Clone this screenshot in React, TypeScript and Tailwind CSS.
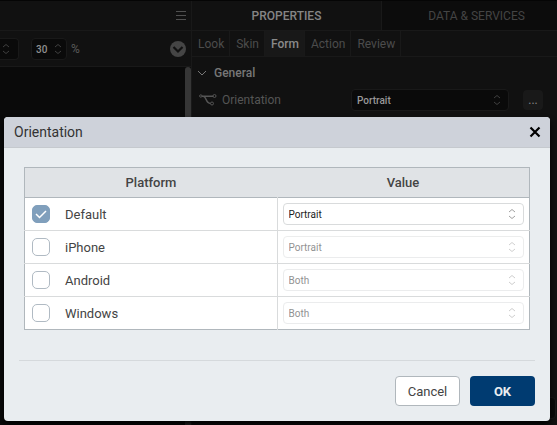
import { useState } from "react";
import type { ReactNode } from "react";

function Spinner({ className = "" }: { className?: string }) {
  return (
    <svg
      className={"pointer-events-none h-3 w-2 shrink-0 " + className}
      viewBox="0 0 8 12"
      fill="none"
      stroke="currentColor"
      strokeWidth="1"
      aria-hidden="true"
    >
      <path d="M1 4 4 1.5 7 4M1 8 4 10.5 7 8" />
    </svg>
  );
}

function SelectBox({
  label,
  value,
  disabled = false,
}: {
  label: string;
  value: string;
  disabled?: boolean;
}) {
  return (
    <div className={"relative " + (disabled ? "opacity-50" : "")}>
      <select
        aria-label={label}
        defaultValue={value}
        disabled={disabled}
        className="block h-[22px] w-full appearance-none rounded border border-[#d9dbdc] bg-white px-[5px] pt-px text-[10px] text-[#222] opacity-100"
      >
        <option>Portrait</option>
        <option>Landscape</option>
        <option>Both</option>
      </select>
      <Spinner className="absolute top-[5px] right-2 text-[#a0a0a0]" />
    </div>
  );
}

const platforms = [
  { name: "Default", value: "Portrait" },
  { name: "iPhone", value: "Portrait" },
  { name: "Android", value: "Both" },
  { name: "Windows", value: "Both" },
];

function PlatformRow({ name, value }: { name: string; value: string }) {
  const [checked, setChecked] = useState(name === "Default");
  return (
    <tr className="h-[33px] border-t border-[#d9dbdc] first:border-[#b0b7bc]">
      <td className="border-r border-[#d9dbdc] p-0">
        <label className="flex items-center pl-[7px] text-[13px]">
          <span className="relative mr-[15px] block size-[18px]">
            <input
              type="checkbox"
              checked={checked}
              onChange={(e) => setChecked(e.target.checked)}
              className="block size-[18px] appearance-none rounded-[5px] border border-[#b0bac3] bg-white checked:border-[#809fbc] checked:bg-[#809fbc]"
            />
            {checked && (
              <svg
                className="pointer-events-none absolute inset-0"
                viewBox="0 0 18 18"
                fill="none"
                stroke="white"
                strokeWidth="1.5"
                aria-hidden="true"
              >
                <path d="m4 9 3.5 3.5L14 6" />
              </svg>
            )}
          </span>
          <span className="pt-[2px] leading-4">{name}</span>
        </label>
      </td>
      <td className="px-[5px] py-0">
        <SelectBox label={name + " orientation"} value={value} disabled={!checked} />
      </td>
    </tr>
  );
}

function Dialog() {
  return (
    <section
      role="dialog"
      aria-labelledby="dialog-title"
      className="flex w-full flex-col self-start overflow-hidden rounded bg-[#e9edf0] text-[#444] shadow-[0_4px_6px_#000]"
    >
      <header className="flex h-[31px] items-center justify-between border-b border-[#c5c9ce] bg-[#ced2da] pr-[9px] pl-[10px]">
        <h2 id="dialog-title" className="text-sm text-[#333]">
          Orientation
        </h2>
        <button type="button" aria-label="Close" className="text-black">
          <svg className="size-3" viewBox="0 0 12 12" stroke="currentColor" strokeWidth="2.2" aria-hidden="true">
            <path d="m1.5 1.5 9 9m0-9-9 9" />
          </svg>
        </button>
      </header>
      <div className="px-5 pt-[19px]">
        <table className="w-full table-fixed border-collapse border border-[#b0b7bc] bg-white">
          <thead>
            <tr className="h-[30px] bg-[#e0e3e6] text-[13px]">
              <th className="p-0 font-medium">Platform</th>
              <th className="p-0 font-medium">Value</th>
            </tr>
          </thead>
          <tbody>
            {platforms.map((p) => (
              <PlatformRow key={p.name} name={p.name} value={p.value} />
            ))}
          </tbody>
        </table>
      </div>
      <footer className="mx-[15px] mt-[30px] flex justify-end gap-[10px] border-t border-[#d5d9dc] pt-[15px] pb-[15px]">
        <button
          type="button"
          className="h-[30px] w-[65px] rounded border border-[#b0b7bc] bg-white pt-px text-[13px]"
        >
          Cancel
        </button>
        <button
          type="button"
          className="h-[30px] w-[65px] rounded bg-[#003b71] pt-px text-[13px] font-bold text-[#e9edf0]"
        >
          OK
        </button>
      </footer>
    </section>
  );
}

function Tab({ children, active = false }: { children: ReactNode; active?: boolean }) {
  return (
    <button
      type="button"
      className={
        "border-r border-[#191919] pr-[5px] pl-[6px] text-xs " +
        (active ? "bg-[#181818] font-medium text-[#8a8a8a]" : "text-[#4c4c4c]")
      }
    >
      {children}
    </button>
  );
}

function Editor() {
  return (
    <div className="flex w-[192px] shrink-0 flex-col border-r border-[#191919]">
      <div className="flex h-[30px] shrink-0 items-center justify-end border-b border-[#191919] pr-[5px]">
        <button type="button" aria-label="Menu" className="text-[#505050]">
          <svg className="h-[10px] w-[10px]" viewBox="0 0 10 10" stroke="currentColor" aria-hidden="true">
            <path d="M0 .5h10M0 4.5h10M0 8.5h10" />
          </svg>
        </button>
      </div>
      <div className="flex h-9 shrink-0 items-center border-b border-[#191919] pr-[5px] text-[#5a5a5a]">
        <div className="flex h-[22px] w-[19px] items-center justify-end rounded-r border border-l-0 border-[#191919] bg-[#0a0a0a] pr-2">
          <Spinner className="text-[#404040]" />
        </div>
        <div className="ml-3 flex h-[22px] w-9 items-center rounded border border-[#191919] bg-[#0a0a0a] pr-1 pl-1">
          <input
            aria-label="Zoom"
            defaultValue="30"
            className="w-full min-w-0 bg-transparent pt-px text-[10px] font-medium text-[#909090]"
          />
          <Spinner className="text-[#404040]" />
        </div>
        <span className="ml-1 pt-px text-xs">%</span>
        <button type="button" aria-label="More options" className="ml-auto text-[#454545]">
          <svg className="size-4" viewBox="0 0 16 16" aria-hidden="true">
            <circle cx="8" cy="8" r="8" fill="currentColor" />
            <path d="M3.5 6 8 10.5 12.5 6" fill="none" stroke="#111" strokeWidth="2.2" />
          </svg>
        </button>
      </div>
      <div className="flex grow justify-end bg-[#0a0a0a]">
        <div className="w-[6px] rounded-t bg-[#363636]" />
      </div>
    </div>
  );
}

function Properties() {
  return (
    <div className="flex min-w-0 grow flex-col">
      <div className="flex h-[30px] shrink-0 border-b border-[#191919] text-xs">
        <button type="button" className="w-[190px] border-r border-[#191919] font-medium text-[#858585]">
          PROPERTIES
        </button>
        <button type="button" className="grow bg-[#0c0c0c] pl-[14px] text-[#444]">
          DATA &amp; SERVICES
        </button>
      </div>
      <nav className="flex h-[26px] shrink-0 border-b border-[#191919]">
        <Tab>Look</Tab>
        <Tab>Skin</Tab>
        <Tab active>Form</Tab>
        <Tab>Action</Tab>
        <Tab>Review</Tab>
      </nav>
      <button type="button" className="flex h-8 shrink-0 items-center gap-[7px] pl-[5px] text-xs font-medium text-[#777]">
        <svg className="size-[10px]" viewBox="0 0 10 10" fill="none" stroke="currentColor" aria-hidden="true">
          <path d="m1 3 4 4 4-4" />
        </svg>
        General
      </button>
      <div className="flex h-[22px] shrink-0 items-center pr-[14px] pl-[7px]">
        <svg
          className="mr-[5px] h-3 w-[18px] shrink-0 text-[#555]"
          viewBox="0 0 18 12"
          fill="none"
          stroke="currentColor"
          aria-hidden="true"
        >
          <circle cx="1.8" cy="2" r="1.2" />
          <circle cx="15.5" cy="2" r="1.5" />
          <circle cx="13" cy="9.5" r="1.5" />
          <path strokeWidth="1.5" d="M3 2.2H14M4.5 2.5c3 0 2 7 7 7" />
        </svg>
        <label htmlFor="orientation" className="text-xs text-[#555]">
          Orientation
        </label>
        <div className="relative ml-auto w-[158px]">
          <select
            id="orientation"
            defaultValue="Portrait"
            className="block h-[22px] w-full appearance-none rounded border border-[#191919] bg-[#0a0a0a] px-[5px] text-[10px] font-medium text-[#999]"
          >
            <option>Portrait</option>
            <option>Both</option>
          </select>
          <Spinner className="absolute top-[5px] right-2 text-[#404040]" />
        </div>
        <button
          type="button"
          className="ml-[14px] h-5 w-5 shrink-0 rounded bg-[#191919] text-xs text-[#888]"
        >
          ...
        </button>
      </div>
      <div className="mt-auto mr-px mb-[6px] ml-40 h-[22px] rounded border border-[#191919] bg-[#0a0a0a]" />
    </div>
  );
}

export default function App() {
  return (
    <main className="relative min-h-screen overflow-hidden bg-[#111] font-['Roboto','Liberation_Sans',sans-serif]">
      <div className="flex h-screen border-t border-[#050505]">
        <Editor />
        <Properties />
      </div>
      <div className="absolute inset-0 flex pt-[117px] pr-[7px] pl-1">
        <Dialog />
      </div>
    </main>
  );
}
